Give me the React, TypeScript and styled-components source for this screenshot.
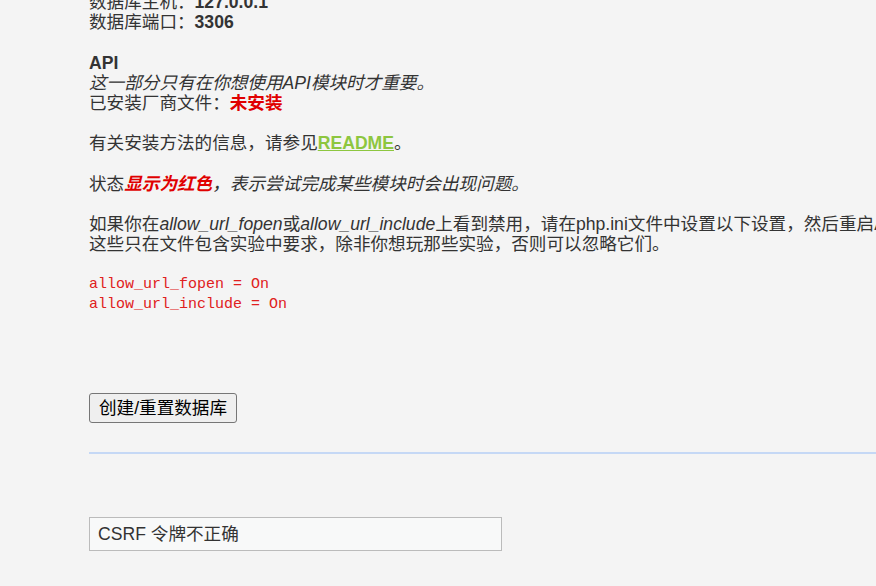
import React from "react";
import styled, { createGlobalStyle } from "styled-components";

const GlobalStyle = createGlobalStyle`
  html, body {
    margin: 0;
    padding: 0;
    background: #f4f4f4;
    overflow: hidden;
  }
  body {
    font-family: "Liberation Sans", Arial, "Noto Sans CJK SC", sans-serif;
    font-size: 17.6px;
    line-height: 20.2px;
    color: #333;
  }
`;

const Page = styled.div`
  width: 1000px;
  margin-top: -8px;
  padding-left: 89px;
  padding-bottom: 40px;
`;

const Para = styled.p`
  margin: 0 0 20.2px;
`;

const Line = styled.span`
  display: block;
`;

const Heading = styled.span`
  display: block;
  font-weight: bold;
`;

const Strong = styled.b`
  font-weight: bold;
`;

const Warn = styled.span<{ $italic?: boolean }>`
  color: #e00000;
  font-weight: bold;
  font-style: ${(p) => (p.$italic ? "italic" : "normal")};
`;

const Readme = styled.a`
  color: #8dc63f;
  font-weight: bold;
  text-decoration: underline;
`;

const Code = styled.pre`
  margin: 20.4px 0 0;
  font-family: "Liberation Mono", "Courier New", "Noto Sans CJK SC", monospace;
  font-size: 15px;
  line-height: 20px;
  color: #e02020;
`;

const Form = styled.form`
  margin-top: 78px;
`;

const Button = styled.button`
  font-family: "Liberation Sans", Arial, "Noto Sans CJK SC", sans-serif;
  font-size: 17.6px;
  line-height: 22px;
  height: 30px;
  padding: 1px 9px;
  color: #000;
  background: #efefef;
  border: 1px solid #767676;
  border-radius: 3px;
`;

const Divider = styled.div`
  margin-top: 29px;
  height: 2px;
  background: #c5d8f5;
`;

const Message = styled.div`
  margin-top: 63px;
  width: 395px;
  padding: 6px 8px;
  background: #f8f9f9;
  border: 1px solid #bbb;
  line-height: 20px;
`;

export default function App() {
  return (
    <>
      <GlobalStyle />
      <Page>
        <Para>
          <Line>
            数据库主机：<Strong>127.0.0.1</Strong>
          </Line>
          <Line>
            数据库端口：<Strong>3306</Strong>
          </Line>
        </Para>
        <Para>
          <Heading>API</Heading>
          <Line>
            <i>这一部分只有在你想使用API模块时才重要。</i>
          </Line>
          <Line>
            已安装厂商文件：<Warn>未安装</Warn>
          </Line>
        </Para>
        <Para>
          有关安装方法的信息，请参见<Readme href="#">README</Readme>。
        </Para>
        <Para>
          状态<Warn $italic>显示为红色</Warn>
          <i>，表示尝试完成某些模块时会出现问题。</i>
        </Para>
        <div>
          <Line>
            如果你在<i>allow_url_fopen</i>或<i>allow_url_include</i>
            上看到禁用，请在php.ini文件中设置以下设置，然后重启Apache。
          </Line>
          <Line>这些只在文件包含实验中要求，除非你想玩那些实验，否则可以忽略它们。</Line>
        </div>
        <Code>{"allow_url_fopen = On\nallow_url_include = On"}</Code>
        <Form onSubmit={(e) => e.preventDefault()}>
          <Button type="submit">创建/重置数据库</Button>
        </Form>
        <Divider />
        <Message>CSRF 令牌不正确</Message>
      </Page>
    </>
  );
}
